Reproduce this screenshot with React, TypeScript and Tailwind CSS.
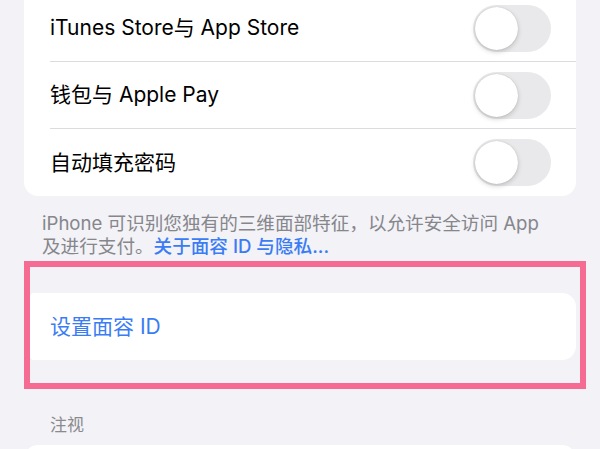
const rows = ["iTunes Store与 App Store", "钱包与 Apple Pay", "自动填充密码"];

const font = { fontFamily: '"Inter", "Noto Sans CJK SC", sans-serif' };

function Toggle() {
  return (
    <div className="flex h-[47px] w-[78px] shrink-0 items-center rounded-full bg-[#e9e9eb] p-[2px]">
      <div className="h-[43px] w-[43px] rounded-full bg-white shadow-[0_2px_5px_rgba(0,0,0,0.18),0_0_1px_rgba(0,0,0,0.2)]" />
    </div>
  );
}

export default function App() {
  return (
    <div
      className="h-[449px] w-[600px] overflow-hidden bg-[#f2f2f7]"
      style={font}
    >
      <div className="mx-[24px] mt-[-5px] rounded-b-[14px] bg-white">
        {rows.map((label, i) => (
          <div className="pl-[26px]" key={label}>
            <div
              className={
                "flex h-[67px] items-center justify-between pr-[25px] " +
                (i < rows.length - 1 ? "border-b border-[#dcdce0]" : "")
              }
            >
              <span className="text-[21px] text-black">{label}</span>
              <Toggle />
            </div>
          </div>
        ))}
      </div>

      <p className="mt-[16px] px-[42px] text-[18.6px] leading-[23px] text-[#86868b]">
        iPhone 可识别您独有的三维面部特征，以允许安全访问 App
        <br />
        及进行支付。
        <span className="font-medium text-[#3a7cf4]">关于面容 ID 与隐私...</span>
      </p>

      <div className="mt-[3px] ml-[24px] w-[562px] border-[6px] border-[#f66b91] pt-[26px] pb-[23px] pr-[4px]">
        <div className="flex h-[67px] items-center rounded-l-[4px] rounded-r-[14px] bg-white pl-[20px]">
          <span className="text-[21px] text-[#3a7cf4]">设置面容 ID</span>
        </div>
      </div>

      <div className="mt-[25px] px-[50px] text-[17px] leading-[22px] text-[#8a8a8e]">
        注视
      </div>
      <div className="mx-[24px] mt-[9px] h-[60px] rounded-[14px] bg-white" />
    </div>
  );
}
